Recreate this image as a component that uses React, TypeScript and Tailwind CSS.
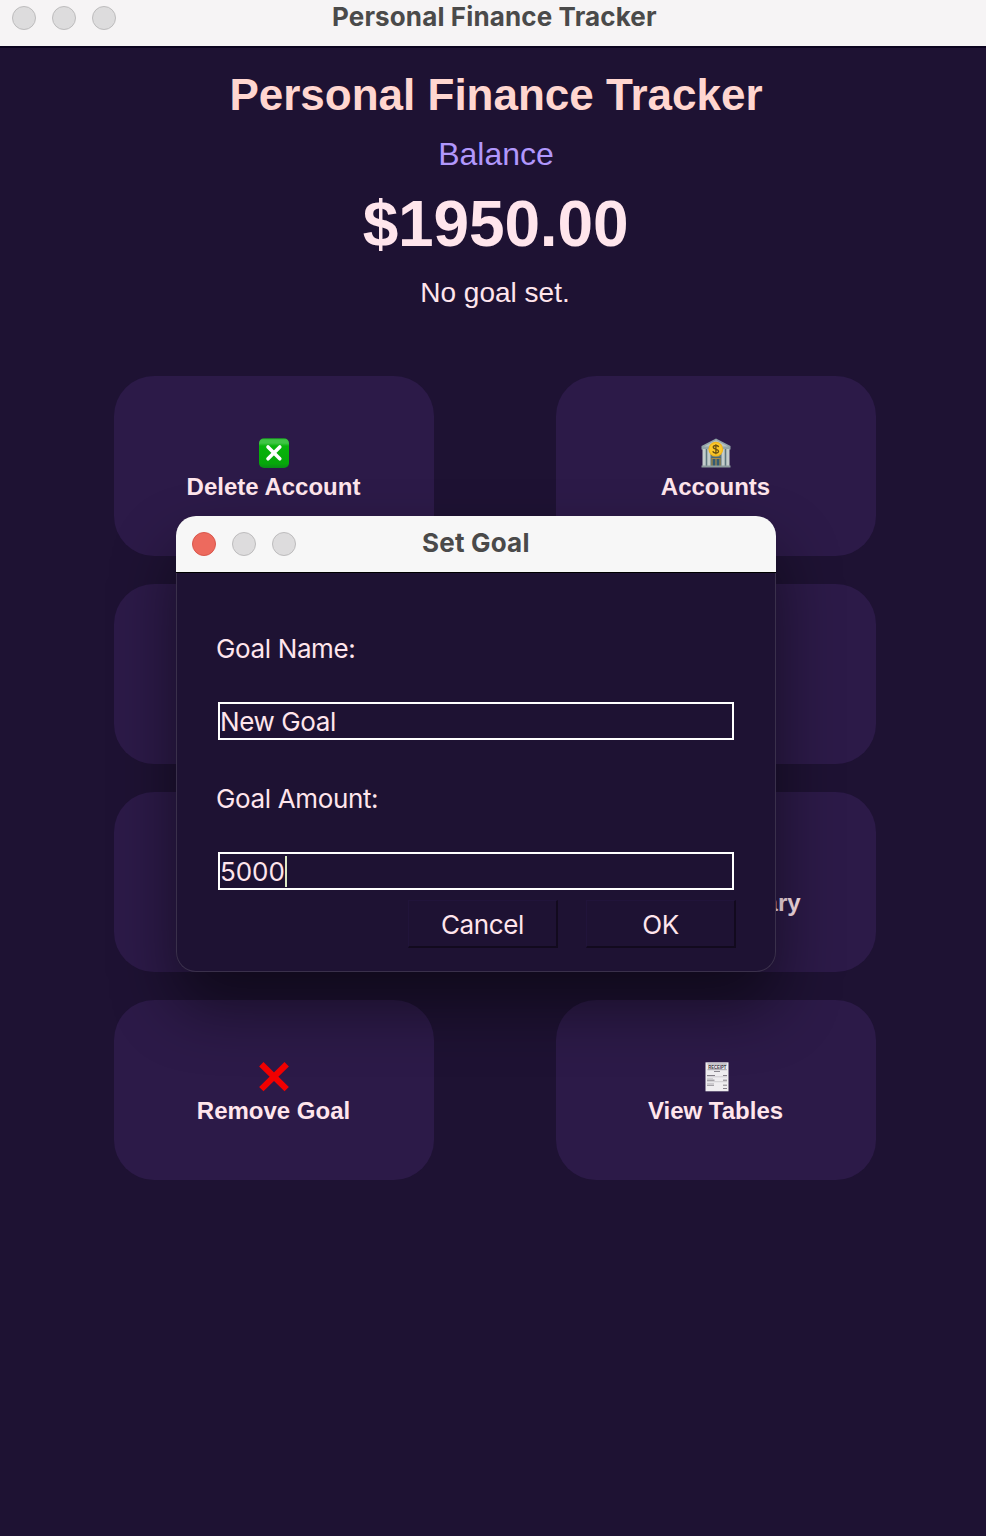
import React from "react";

function CrossBoxIcon() {
  return (
    <svg viewBox="0 0 30 30" className="h-[30px] w-[30px]">
      <defs>
        <linearGradient id="boxFill" x1="0" y1="0" x2="0" y2="1">
          <stop offset="0" stopColor="#14a01c" />
          <stop offset="0.05" stopColor="#3fc544" />
          <stop offset="0.16" stopColor="#3fc544" />
          <stop offset="0.26" stopColor="#08b40b" />
          <stop offset="0.85" stopColor="#06a80a" />
          <stop offset="1" stopColor="#0b8a18" />
        </linearGradient>
      </defs>
      <rect x="0" y="0.3" width="30" height="29.7" rx="5" fill="url(#boxFill)" />
      <path d="M9 9 L20.8 20.8 M20.8 9 L9 20.8" stroke="#fff" strokeWidth="3.6" strokeLinecap="round" />
    </svg>
  );
}

function BankIcon() {
  return (
    <svg viewBox="0 0 30 30" className="h-[30px] w-[30px]">
      <path d="M15 0.5 L29.5 8 V11.5 H0.5 V8 Z" fill="#93a5a8" />
      <path d="M15 2.2 L27 8.6 H3 Z" fill="#b9c4c3" />
      <rect x="2" y="11" width="26" height="17" fill="#5d757d" />
      <rect x="10.5" y="19.5" width="9" height="8.5" fill="#315a75" />
      <path d="M11 28 V20.5 H19 V28 M15 20 V28" stroke="#a98b48" strokeWidth="1.2" fill="none" />
      <g fill="#c3cdcb">
        <rect x="1.5" y="11" width="3.2" height="17" />
        <rect x="6.3" y="11" width="3.2" height="17" />
        <rect x="20.5" y="11" width="3.2" height="17" />
        <rect x="25.3" y="11" width="3.2" height="17" />
      </g>
      <rect x="0.5" y="27.5" width="29" height="2" fill="#8d9c9e" />
      <circle cx="14.8" cy="11.2" r="7.4" fill="#efb51d" />
      <circle cx="14.8" cy="11.2" r="6.2" fill="#fdc92a" />
      <path d="M17.6 9.2 C17.2 6.9 12.2 6.9 12.2 9.3 C12.2 11.5 17.6 10.9 17.6 13.3 C17.6 15.6 12.2 15.4 11.9 13.1 M14.9 6.2 V16.3" stroke="#6b5212" strokeWidth="1.3" fill="none" />
    </svg>
  );
}

function CrossIcon() {
  return (
    <svg viewBox="0 0 30 30" className="h-[30px] w-[30px]">
      <path d="M2.3 2.3 L27.7 27.1 M27.7 2.3 L2.3 27.1" stroke="#f20000" strokeWidth="6.2" />
    </svg>
  );
}

function ReceiptIcon() {
  return (
    <svg viewBox="0 0 30 30" className="h-[30px] w-[30px]">
      <rect x="4.5" y="0.3" width="23" height="29" fill="#efedf0" />
      <path d="M6.5 2 H25.8 M6.5 7.7 H25.8" stroke="#85818a" strokeWidth="0.7" />
      <text x="16.2" y="6.7" textAnchor="middle" textLength="18" lengthAdjust="spacingAndGlyphs" fontSize="5.4" fontWeight="700" fontFamily="Liberation Sans, sans-serif" fill="#37333c">
        RECEIPT
      </text>
      <path d="M13 9.5 H19" stroke="#8b8790" strokeWidth="1" />
      <path d="M6 13.5 H14 M22 13.5 H26 M6 18.2 H13.5 M22 18.2 H26 M6 23.2 H13 M22 23.2 H26 M22 26.5 H26" stroke="#77737c" strokeWidth="0.9" />
      <path d="M6 16.7 H12 M6 21.5 H13 M6 14.8 H26 M6 19.7 H26" stroke="#b5b2b9" strokeWidth="0.6" />
    </svg>
  );
}

function Card({ icon, label }: { icon?: React.ReactNode; label?: string }) {
  return (
    <div className="flex h-[180px] w-[320px] flex-col items-center rounded-[40px] bg-[#2c1a48] pt-[62px]">
      <div className="h-[30px]">{icon}</div>
      <div className="mt-[5px] pr-px text-[24px] leading-[28px] font-bold text-[#ffe5ec]">{label}</div>
    </div>
  );
}

function Light({ active = false }: { active?: boolean }) {
  return (
    <span
      className={
        active
          ? "h-6 w-6 rounded-full border border-[#d9574c] bg-[#ed6a5e]"
          : "h-6 w-6 rounded-full border border-[#bdbcbd] bg-[#dddcdd]"
      }
    />
  );
}

function Field({ label, value, focused = false }: { label: string; value: string; focused?: boolean }) {
  return (
    <div>
      <div className="ml-[-2px] h-8 text-[26px] leading-8 tracking-[-0.36px]">{label}</div>
      <div className="mt-[37px] flex h-[38px] w-[516px] items-center border-2 border-white text-[26px] leading-8">
        <span className={focused ? "pt-[2px] tracking-[-0.05px]" : "pt-[2px] tracking-[-0.4px]"}>{value}</span>
        {focused && <span className="h-[31px] w-[2px] bg-[#dce8c4]" />}
      </div>
    </div>
  );
}

function DialogButton({ children }: { children: string }) {
  return (
    <button className="h-12 w-[150px] border-t border-r-2 border-b-2 border-l border-t-[#21143a] border-r-[#120a1e] border-b-[#120a1e] border-l-[#21143a] pt-[2px] text-[26px] leading-8 tracking-[-0.35px]">
      {children}
    </button>
  );
}

function GoalDialog() {
  return (
    <div className="absolute top-[516px] left-[176px] h-[456px] w-[600px] rounded-[20px] bg-[#1e1233] font-['Inter',sans-serif] text-[#ffe5ec] shadow-[0_34px_64px_rgba(0,0,0,0.48)]">
      <div className="flex h-[57px] items-center gap-4 rounded-t-[20px] border-b border-black bg-[#f7f7f7] pl-4">
        <Light active />
        <Light />
        <Light />
        <div className="mb-[2px] ml-[110px] text-[26px] leading-8 font-bold tracking-[0.2px] text-[#4a4a4a]">Set Goal</div>
      </div>
      <div className="flex h-[399px] flex-col rounded-b-[20px] border border-t-0 border-[#3a304b] pt-[60px] pl-[41px]">
        <Field label="Goal Name:" value="New Goal" />
        <div className="mt-[43px]">
          <Field label="Goal Amount:" value="5000" focused />
        </div>
        <div className="mt-[10px] flex gap-7 pl-[190px]">
          <DialogButton>Cancel</DialogButton>
          <DialogButton>OK</DialogButton>
        </div>
      </div>
    </div>
  );
}

export default function App() {
  return (
    <div className="relative h-[1536px] w-[986px] overflow-hidden bg-[#1e1233] font-['Liberation_Sans',Arial,sans-serif]">
      <header className="flex h-[48px] gap-4 border-b-2 border-[#0b0420] bg-[#f6f4f5] pt-[6px] pl-3">
        <Light />
        <Light />
        <Light />
        <div className="mt-[-5px] ml-[200px] font-['Inter',sans-serif] text-[26px] leading-8 font-bold tracking-[0.13px] text-[#4a4a4a]">
          Personal Finance Tracker
        </div>
      </header>
      <main className="flex w-[990px] flex-col items-center">
        <h1 className="mt-[22px] pl-[2px] text-[44px] leading-[50px] font-bold text-[#ffd6d0]">Personal Finance Tracker</h1>
        <div className="mt-4 pl-[2px] text-[32px] leading-[36px] text-[#b197fc]">Balance</div>
        <div className="mt-[15px] pl-px text-[64px] leading-[74px] font-bold tracking-[-0.15px] text-[#ffe5ec]">$1950.00</div>
        <div className="mt-[16px] text-[28px] leading-8 text-[#ffe5ec]">No goal set.</div>
        <div className="mt-[67px] grid grid-cols-[320px_320px] gap-x-[122px] gap-y-7">
          <Card icon={<CrossBoxIcon />} label="Delete Account" />
          <Card icon={<BankIcon />} label="Accounts" />
          <Card />
          <Card />
          <Card />
          <Card label="View Summary" />
          <Card icon={<CrossIcon />} label="Remove Goal" />
          <Card icon={<ReceiptIcon />} label="View Tables" />
        </div>
      </main>
      <GoalDialog />
    </div>
  );
}
